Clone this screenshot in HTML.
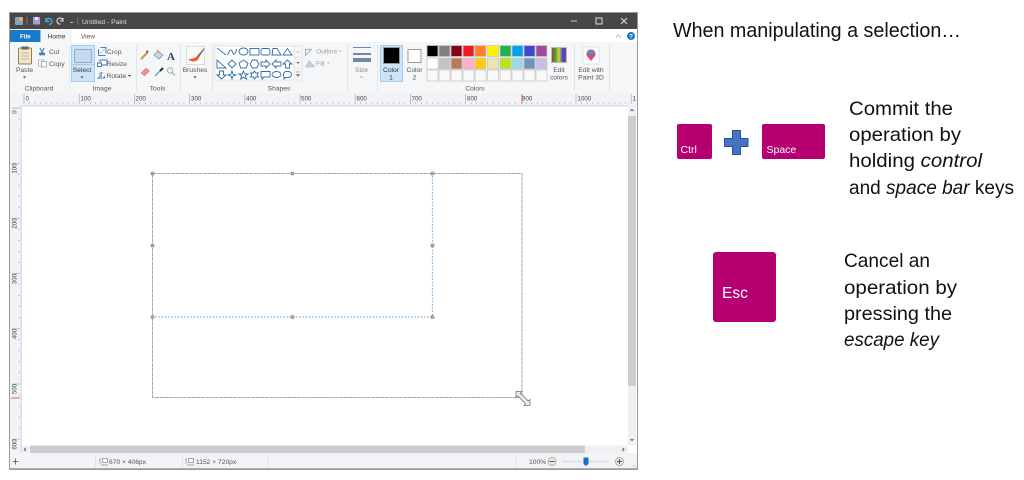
<!DOCTYPE html>
<html><head><meta charset="utf-8"><style>
html,body{margin:0;padding:0;background:#fff;width:1024px;height:480px;overflow:hidden}
svg{display:block;position:absolute;left:0;top:0}
.u{font-family:"Liberation Sans",sans-serif;font-size:6.7px;fill:#555}
.c{text-anchor:middle}
.r{font-family:"Liberation Sans",sans-serif;font-size:6.2px;fill:#444}
.t{font-family:"Liberation Sans",sans-serif;font-size:19.5px;fill:#111}
.i{font-style:italic}
.sh{fill:none;stroke:#2f6ea8;stroke-width:.9}
#w{filter:blur(.35px)}
</style></head><body>
<svg width="1024" height="480" viewBox="0 0 1024 480" xmlns="http://www.w3.org/2000/svg">
<g id="w">
<rect x="9.5" y="12.5" width="628" height="457" fill="#fff" stroke="#999"/>
<rect x="10" y="13" width="627" height="16" fill="#474747"/>
<!-- QAT -->
<rect x="15" y="17" width="8" height="8" rx="1" fill="#7fa8b8"/><circle cx="21" cy="19" r="2" fill="#e8b050"/>
<rect x="26.5" y="17" width=".8" height="8" fill="#888"/>
<rect x="33" y="17" width="7" height="7.5" fill="#a99bd8"/><rect x="35" y="17" width="3" height="3" fill="#eee"/>
<path d="M46 21.5a3 3 0 1 1 3 3M46 18v3.5h3.5" fill="none" stroke="#4aa0e0" stroke-width="1.5"/>
<path d="M63 21a3 3 0 1 0-2.5 3M63 18v3h-3" fill="none" stroke="#ccc" stroke-width="1.3"/>
<rect x="70" y="22" width="3" height="1" fill="#bbb"/>
<rect x="77.5" y="17" width=".7" height="8" fill="#888"/>
<text x="82" y="24" class="u" style="font-size:6.8px;fill:#ddd">Untitled - Paint</text>
<rect x="571" y="20.5" width="6" height="1" fill="#ccc"/>
<rect x="596" y="18" width="6" height="6" fill="none" stroke="#ddd"/>
<path d="M621 18l6 6m0-6l-6 6" stroke="#ddd" stroke-width="1"/>
<!-- tabs -->
<rect x="10" y="29" width="627" height="13" fill="#fff"/>
<rect x="10" y="30" width="30.5" height="12" fill="#1979ca"/>
<text x="25.3" y="38.5" class="u c" style="fill:#fff;font-weight:bold;font-size:6.2px">File</text>
<rect x="41" y="30" width="31" height="12" fill="#f5f6f7"/>
<text x="56.5" y="38.5" class="u c" style="fill:#333">Home</text>
<text x="88" y="38.5" class="u c">View</text>
<path d="M616 37.5l2.500-2.500 2.500 2.500" fill="none" stroke="#bbb"/>
<circle cx="631" cy="36" r="4" fill="#1979ca"/><text x="631" y="38.5" class="u c" style="fill:#fff;font-size:6.5px;font-weight:bold">?</text>
<!-- ribbon -->
<rect x="10" y="42" width="627" height="51" fill="#f5f6f7"/>
<g fill="#e4e5e7">
<rect x="69" y="45" width="1" height="46"/><rect x="136" y="45" width="1" height="46"/><rect x="180" y="45" width="1" height="46"/><rect x="212" y="45" width="1" height="46"/><rect x="347" y="45" width="1" height="46"/><rect x="377" y="45" width="1" height="46"/><rect x="574" y="45" width="1" height="46"/><rect x="609" y="45" width="1" height="46"/>
</g>
<!-- paste -->
<rect x="18.5" y="48" width="13" height="16" rx="1" fill="#f2e6cf" stroke="#9a7a4a"/>
<rect x="21.5" y="46.5" width="7" height="3" fill="#666"/>
<path d="M21 53h8M21 56h8M21 59h8" stroke="#b8a888" stroke-width=".8"/>
<text x="24.5" y="72" class="u c">Paste</text>
<path d="M23 76.5h3l-1.500 1.800z" fill="#333"/>
<!-- cut copy -->
<path d="M40 48l3 6m1-6l-3 6" stroke="#5a80b8" stroke-width="1.2"/>
<circle cx="40.5" cy="54" r="1.500" fill="#3a78c0"/><circle cx="43.5" cy="54" r="1.500" fill="#3a78c0"/>
<text x="49" y="54" class="u">Cut</text>
<rect x="38.5" y="60" width="5" height="6" fill="#fff" stroke="#aaa" stroke-width=".8"/><rect x="41.5" y="61.5" width="5" height="5.5" fill="#fff" stroke="#999" stroke-width=".8"/>
<text x="49" y="66" class="u">Copy</text>
<text x="39" y="90.5" class="u c">Clipboard</text>
<!-- select -->
<rect x="71.5" y="45.5" width="23" height="36" fill="#cce4f7" stroke="#a3cdee"/>
<rect x="71.5" y="64" width="23" height=".8" fill="#9cc4e4"/>
<rect x="74.5" y="49.5" width="17" height="13" fill="#c5daf0" stroke="#6e94c0" stroke-dasharray="2 1"/>
<text x="82" y="72" class="u c" style="fill:#333">Select</text>
<path d="M80.5 76.5h3l-1.500 1.800z" fill="#333"/>
<!-- crop resize rotate -->
<path d="M98.5 49v6.5h7M100.5 47.5h5.500v6" fill="none" stroke="#4b7fbd"/><path d="M98 55l8-7" stroke="#a8b8cc" stroke-width=".6"/>
<text x="107" y="54" class="u">Crop</text>
<rect x="100" y="60" width="7" height="5" fill="#fff" stroke="#3a78c0"/><rect x="97.5" y="63" width="4" height="3.5" fill="#fff" stroke="#3a78c0"/>
<text x="106.5" y="66" class="u">Resize</text>
<path d="M97.5 78.5l4-5.500v5.500z" fill="#9bb8d8" stroke="#4b7fbd" stroke-width=".5"/><path d="M102 78.5l3-3v3z" fill="#4b7fbd"/><path d="M99 74a3 3 0 0 1 4-1" fill="none" stroke="#48a" stroke-width=".7"/>
<text x="106.5" y="78" class="u">Rotate</text><path d="M128 75h3l-1.500 1.800z" fill="#333"/>
<text x="102" y="90.5" class="u c">Image</text>
<!-- tools -->
<path d="M141 59l6.500-6.500" stroke="#c89a38" stroke-width="2"/><path d="M146.5 52.5l1.500-1.500" stroke="#b35" stroke-width="2"/>
<path d="M154 55l4-4 5 4-4 4z" fill="#c7d4e8" stroke="#7a93b8" stroke-width=".7"/><path d="M157 50l3 3" stroke="#e8875a" stroke-width="1.2"/>
<text x="171" y="60" style="font-family:'Liberation Serif',serif;font-size:11px;font-weight:bold;fill:#28405e;text-anchor:middle">A</text>
<path d="M141 73l5-5 3.500 3-5 5z" fill="#e8909a" stroke="#c76a78" stroke-width=".5"/>
<path d="M155 76l5-5" stroke="#7a9cc8" stroke-width="1.4"/><path d="M160 71l3-3" stroke="#333" stroke-width="2"/>
<circle cx="170" cy="70.5" r="2.700" fill="#eef4fa" stroke="#8aa" stroke-width=".8"/><path d="M172 72.5l3 3" stroke="#c9a050" stroke-width="1.2"/>
<text x="157.5" y="90.5" class="u c">Tools</text>
<!-- brushes -->
<rect x="186.5" y="46.5" width="18" height="18" fill="#fafafa" stroke="#ddd"/>
<path d="M188 59c4 4 9 3 11-1l-2-2c-2 2-5 3-9 3z" fill="#e9622a"/><path d="M197 56l7-8 .5 1-6 9z" fill="#8a6a50"/>
<text x="195" y="72" class="u c">Brushes</text>
<path d="M193.5 76.5h3l-1.500 1.800z" fill="#333"/>
<!-- shapes -->
<rect x="215" y="46" width="87" height="34" fill="#fff" stroke="#e4e5e7"/>
<g class="sh">
<path d="M217 48l9 7"/><path d="M227 55c2-1 2-5 4-5s1 4 3 4 2-4 3-5"/>
<ellipse cx="243.5" cy="51.5" rx="4.500" ry="3.500"/><rect x="250" y="48.5" width="9" height="6.5"/><rect x="261" y="48.5" width="9" height="6.5" rx="2"/>
<path d="M272 55l1-6.500h4l4 6.500z"/><path d="M283 55l4.500-6.500 4.500 6.500z"/>
<path d="M217 60v8h9z"/><path d="M232 60l4 4-4 4-4-4z"/><path d="M243.5 60l4.500 3.200-1.700 4.800h-5.600l-1.700-4.800z"/>
<path d="M252.5 60h4l2.500 4-2.500 4h-4l-2.500-4z"/><path d="M261 62h5v-2l4 4-4 4v-2h-5z"/><path d="M281 62h-5v-2l-4 4 4 4v-2h5z"/><path d="M285.5 68v-4h-2.500l4.500-4 4.500 4h-2.500v4z"/>
<path d="M219.5 71h4v4h2.500l-4.500 4-4.500-4h2.500z"/><path d="M232 71l1 3 3 1-3 1-1 3-1-3-3-1 3-1z"/><path d="M243.5 71l1.300 3h3.200l-2.600 2 1 3-2.900-1.800-2.900 1.800 1-3-2.600-2h3.200z"/>
<path d="M254.5 71l1.200 2h2.800l-1.400 2 1.400 2h-2.800l-1.200 2-1.200-2h-2.800l1.400-2-1.400-2h2.800z"/>
<path d="M261 71.5h9v5.500h-6l-2 2v-2h-1z"/><ellipse cx="276.5" cy="74.5" rx="4.500" ry="3"/><path d="M283.5 74.500a3 3 0 0 1 3-3h2a3 3 0 0 1 0 6h-3l-1.500 1.500v-2a3 3 0 0 1-.5-2.500z"/>
</g>
<rect x="294" y="46" width="8" height="11" fill="#f5f6f7" stroke="#e4e5e7"/><rect x="294" y="57" width="8" height="11" fill="#f5f6f7" stroke="#e4e5e7"/><rect x="294" y="68" width="8" height="12" fill="#f5f6f7" stroke="#e4e5e7"/>
<path d="M296.5 52.5l1.500-1.500 1.500 1.500" fill="none" stroke="#bbb" stroke-width=".7"/><path d="M296.5 62h3l-1.500 1.800z" fill="#444"/><path d="M296 72h4M296.5 74.5h3l-1.500 1.800z" stroke="#666" stroke-width=".6" fill="#666"/>
<path d="M305.5 56v-6.500h6M306 55l6-6" stroke="#a8aeb8" fill="none"/>
<text x="316" y="53.5" class="u" style="fill:#a0a0a0">Outline</text><path d="M339 50.5h2.500l-1.200 1.500z" fill="#aaa"/>
<path d="M306 67l3-6 5 5v1z" fill="#c5d0e0" stroke="#9fb0c8" stroke-width=".6"/>
<text x="316" y="65.5" class="u" style="fill:#a0a0a0">Fill</text><path d="M327 62.5h2.500l-1.200 1.500z" fill="#aaa"/>
<text x="279" y="90.5" class="u c">Shapes</text>
<!-- size -->
<rect x="353" y="47" width="18" height="1" fill="#7088ae"/><rect x="353" y="53" width="18" height="2" fill="#7088ae"/><rect x="353" y="58" width="18" height="4" fill="#7088ae"/>
<text x="361.5" y="72" class="u c" style="fill:#888">Size</text>
<path d="M360 76.5h3l-1.500 1.800z" fill="#aaa"/>
<!-- colour 1/2 -->
<rect x="380.5" y="45.5" width="22" height="36" fill="#cce4f7" stroke="#a3cdee"/>
<rect x="383.5" y="47.5" width="16" height="16" fill="#000" stroke="#999"/>
<text x="391" y="72" class="u c" style="fill:#333">Color</text><text x="391" y="79.5" class="u c" style="fill:#333">1</text>
<rect x="408" y="49.5" width="13" height="13" fill="#fff" stroke="#999"/>
<text x="414.5" y="72" class="u c">Color</text><text x="414.5" y="79.5" class="u c">2</text>
<!-- palette -->
<g stroke="#c8c8c8" stroke-width=".8">
<rect x="427" y="45.5" width="11" height="11" fill="#000"/><rect x="439" y="45.5" width="11" height="11" fill="#7f7f7f"/><rect x="451" y="45.5" width="11" height="11" fill="#880015"/><rect x="463" y="45.5" width="11" height="11" fill="#ed1c24"/><rect x="475" y="45.5" width="11" height="11" fill="#ff7f27"/><rect x="487.5" y="45.5" width="11" height="11" fill="#fff200"/><rect x="500" y="45.5" width="11" height="11" fill="#22b14c"/><rect x="512" y="45.5" width="11" height="11" fill="#00a2e8"/><rect x="524" y="45.5" width="11" height="11" fill="#3f48cc"/><rect x="536" y="45.5" width="11" height="11" fill="#a349a4"/>
<rect x="427" y="58" width="11" height="11" fill="#fff"/><rect x="439" y="58" width="11" height="11" fill="#c3c3c3"/><rect x="451" y="58" width="11" height="11" fill="#b97a57"/><rect x="463" y="58" width="11" height="11" fill="#ffaec9"/><rect x="475" y="58" width="11" height="11" fill="#ffc90e"/><rect x="487.5" y="58" width="11" height="11" fill="#efe4b0"/><rect x="500" y="58" width="11" height="11" fill="#b5e61d"/><rect x="512" y="58" width="11" height="11" fill="#99d9ea"/><rect x="524" y="58" width="11" height="11" fill="#7092be"/><rect x="536" y="58" width="11" height="11" fill="#c8bfe7"/>
<rect x="427" y="70" width="11" height="11" fill="#f8f8f8"/><rect x="439" y="70" width="11" height="11" fill="#f8f8f8"/><rect x="451" y="70" width="11" height="11" fill="#f8f8f8"/><rect x="463" y="70" width="11" height="11" fill="#f8f8f8"/><rect x="475" y="70" width="11" height="11" fill="#f8f8f8"/><rect x="487.5" y="70" width="11" height="11" fill="#f8f8f8"/><rect x="500" y="70" width="11" height="11" fill="#f8f8f8"/><rect x="512" y="70" width="11" height="11" fill="#f8f8f8"/><rect x="524" y="70" width="11" height="11" fill="#f8f8f8"/><rect x="536" y="70" width="11" height="11" fill="#f8f8f8"/>
</g>
<text x="475" y="90.5" class="u c">Colors</text>
<!-- edit colours -->
<defs><linearGradient id="g" x1="0" x2="1" y1="0" y2="0"><stop offset="0" stop-color="#c03030"/><stop offset=".25" stop-color="#40a040"/><stop offset=".5" stop-color="#e0d030"/><stop offset=".75" stop-color="#3050d0"/><stop offset="1" stop-color="#a030a0"/></linearGradient></defs>
<rect x="551.5" y="47.5" width="15" height="15" fill="url(#g)" stroke="#bbb"/>
<text x="559" y="72" class="u c">Edit</text><text x="559" y="79.5" class="u c">colors</text>
<!-- paint 3D -->
<rect x="583" y="47" width="16" height="17" fill="#fff" stroke="#e0e0e0"/>
<path d="M591 61l-4-5a4.500 4.500 0 1 1 8 0z" fill="#e0457f"/><path d="M587 53a4.500 4.500 0 0 1 8 0l-4 2z" fill="#3a9ad8"/>
<text x="591" y="72" class="u c">Edit with</text><text x="591" y="79.5" class="u c">Paint 3D</text>
<!-- workspace -->
<rect x="10" y="93" width="627" height="14" fill="#f1f3f7"/>
<rect x="10" y="93" width="12" height="360" fill="#f1f3f7"/>
<rect x="22" y="105" width="606" height="1.5" fill="#d6dfeb"/>
<rect x="20.5" y="105" width="1.5" height="348" fill="#d6dfeb"/>
<rect x="22" y="106.5" width="606" height="339" fill="#fff"/>
<!-- h ruler -->
<path d="M24 94v10M79.2 94v10M134.4 94v10M189.6 94v10M244.8 94v10M300 94v10M355.2 94v10M410.4 94v10M465.6 94v10M576 94v10M631.2 94v10" stroke="#aab" stroke-width=".7"/>
<path d="M29.5 102v2M35 102v2M40.5 102v2M46 102v2M51.5 102v2M57 102v2M62.5 102v2M68 102v2M73.5 102v2M84.7 102v2M90.2 102v2M95.7 102v2M101.2 102v2M106.7 102v2M112.2 102v2M117.7 102v2M123.2 102v2M128.7 102v2M139.9 102v2M145.4 102v2M150.9 102v2M156.4 102v2M161.9 102v2M167.4 102v2M172.9 102v2M178.4 102v2M183.9 102v2M195.1 102v2M200.6 102v2M206.1 102v2M211.6 102v2M217.1 102v2M222.6 102v2M228.1 102v2M233.6 102v2M239.1 102v2M250.3 102v2M255.8 102v2M261.3 102v2M266.8 102v2M272.3 102v2M277.8 102v2M283.3 102v2M288.8 102v2M294.3 102v2M305.5 102v2M311 102v2M316.5 102v2M322 102v2M327.5 102v2M333 102v2M338.5 102v2M344 102v2M349.5 102v2M360.7 102v2M366.2 102v2M371.7 102v2M377.2 102v2M382.7 102v2M388.2 102v2M393.7 102v2M399.2 102v2M404.7 102v2M415.9 102v2M421.4 102v2M426.9 102v2M432.4 102v2M437.9 102v2M443.4 102v2M448.9 102v2M454.4 102v2M459.9 102v2M471.1 102v2M476.6 102v2M482.1 102v2M487.6 102v2M493.1 102v2M498.6 102v2M504.1 102v2M509.6 102v2M515.1 102v2M526.3 102v2M531.8 102v2M537.3 102v2M542.8 102v2M548.3 102v2M553.8 102v2M559.3 102v2M564.8 102v2M570.3 102v2M581.5 102v2M587 102v2M592.5 102v2M598 102v2M603.5 102v2M609 102v2M614.5 102v2M620 102v2M625.5 102v2" stroke="#aab" stroke-width=".6"/>
<g class="r">
<text x="25.5" y="100.5">0</text><text x="80.5" y="100.5">100</text><text x="135.5" y="100.5">200</text><text x="191" y="100.5">300</text><text x="246" y="100.5">400</text><text x="301" y="100.5">500</text><text x="356.5" y="100.5">600</text><text x="411.5" y="100.5">700</text><text x="467" y="100.5">800</text><text x="522" y="100.5">900</text><text x="577.5" y="100.5">1000</text><text x="632.5" y="100.5">1</text>
</g>
<rect x="521.5" y="94" width="1" height="10" fill="#e06060"/>
<!-- v ruler -->
<path d="M12 108h8M12 163.2h8M12 218.4h8M12 273.6h8M12 328.8h8M12 384h8M12 439.2h8" stroke="#aab" stroke-width=".7"/>
<path d="M18 119h2M18 130h2M18 141h2M18 152h2M18 174.2h2M18 185.2h2M18 196.2h2M18 207.2h2M18 229.4h2M18 240.4h2M18 251.4h2M18 262.4h2M18 284.6h2M18 295.6h2M18 306.6h2M18 317.6h2M18 339.8h2M18 350.8h2M18 361.8h2M18 372.8h2M18 395h2M18 406h2M18 417h2M18 428h2" stroke="#aab" stroke-width=".6"/>
<g class="r">
<text transform="translate(16.5,112) rotate(-90)" text-anchor="middle">0</text>
<text transform="translate(16.5,168.5) rotate(-90)" text-anchor="middle">100</text>
<text transform="translate(16.5,223.5) rotate(-90)" text-anchor="middle">200</text>
<text transform="translate(16.5,279) rotate(-90)" text-anchor="middle">300</text>
<text transform="translate(16.5,334) rotate(-90)" text-anchor="middle">400</text>
<text transform="translate(16.5,389) rotate(-90)" text-anchor="middle">500</text>
<text transform="translate(16.5,444.5) rotate(-90)" text-anchor="middle">600</text>
</g>
<rect x="11" y="397.5" width="9" height="1" fill="#e06060"/>
<!-- scrollbars -->
<rect x="628" y="106" width="8" height="339" fill="#f0f0f0"/>
<rect x="628" y="116" width="8" height="270" fill="#cdcdcd"/>
<path d="M630.5 111l1.500-1.500 1.500 1.500M630.5 439l1.500 1.500 1.500-1.500" fill="none" stroke="#555" stroke-width=".9"/>
<rect x="22" y="445.5" width="606" height="8" fill="#f0f0f0"/>
<rect x="30" y="445.5" width="555" height="8" fill="#cdcdcd"/>
<path d="M25.8 448l-1.500 1.500 1.500 1.500M622.5 448l1.500 1.500-1.500 1.500" fill="none" stroke="#555" stroke-width=".9"/>
<!-- status -->
<rect x="10" y="453" width="627" height="15" fill="#f1f3f7"/>
<rect x="10" y="468" width="627" height="1" fill="#b0b0b0"/>
<path d="M95.5 454v13M182.5 454v13M268 454v13M516 454v13" stroke="#e2e4e8"/>
<path d="M12.5 461.5h6M15.5 458.500v6" stroke="#555" stroke-width=".8" fill="#555"/>
<rect x="102.5" y="458.5" width="5" height="4" fill="#fff" stroke="#788" stroke-width=".7"/><path d="M100 458v6M101 465h7" stroke="#889" stroke-width=".7"/>
<text x="109" y="463.8" class="u">670 × 406px</text>
<rect x="188.5" y="458.5" width="5" height="4" fill="#fff" stroke="#788" stroke-width=".7"/><path d="M186 458v6M187 465h7" stroke="#889" stroke-width=".7"/>
<text x="196" y="463.8" class="u">1152 × 720px</text>
<text x="529" y="464" class="u">100%</text>
<circle cx="552" cy="461.5" r="4" fill="#e8e8e8" stroke="#999" stroke-width=".7"/><rect x="549.5" y="461" width="5" height="1" fill="#555"/>
<rect x="562" y="460.5" width="47" height="2" fill="#e0e2e6"/>
<path d="M583.5 457.5h5v6.500l-2.500 2-2.500-2z" fill="#1a70c8"/>
<circle cx="619.5" cy="461.5" r="4" fill="#e8e8e8" stroke="#999" stroke-width=".7"/><path d="M617 461.5h5M619.5 459v5" stroke="#555"/>
<path d="M636 466l-2 2M636 463l-5 5" stroke="#ccc" stroke-width=".6"/>
<!-- canvas -->
<rect x="152.5" y="173.500" width="369.5" height="224" fill="none" stroke="#aaa" stroke-dasharray="4 .6"/>
<path d="M432.5 176v139M155 317h276" fill="none" stroke="#7fb8e6" stroke-width="1.2" stroke-dasharray="1.6 1.6"/>
<g fill="#b0b0b0" stroke="#777" stroke-width=".6">
<rect x="151" y="172" width="3" height="3" rx="1"/><rect x="291" y="172" width="3" height="3" rx="1"/><rect x="431" y="172" width="3" height="3" rx="1"/><rect x="151" y="244" width="3" height="3" rx="1"/><rect x="431" y="244" width="3" height="3" rx="1"/><rect x="151" y="315.5" width="3" height="3" rx="1"/><rect x="291" y="315.5" width="3" height="3" rx="1"/><rect x="431" y="315.5" width="3" height="3" rx="1"/>
</g>
<path d="M516 391.5h6l-1.700 1.700 8 8 1.700-1.700v6h-6l1.700-1.700-8-8-1.700 1.700z" fill="#eee" stroke="#777" stroke-width=".8"/>
</g>
<!-- right -->
<text x="673" y="37" class="t" style="font-size:20.5px" textLength="288" lengthAdjust="spacingAndGlyphs">When manipulating a selection…</text>
<text x="849" y="115" class="t" textLength="104" lengthAdjust="spacingAndGlyphs">Commit the</text>
<text x="849" y="141" class="t" textLength="112" lengthAdjust="spacingAndGlyphs">operation by</text>
<text x="849" y="167" class="t" textLength="133" lengthAdjust="spacingAndGlyphs">holding <tspan class="i">control</tspan></text>
<text x="849" y="194" class="t" textLength="165" lengthAdjust="spacingAndGlyphs">and <tspan class="i">space bar</tspan> keys</text>
<text x="844" y="267" class="t" textLength="86" lengthAdjust="spacingAndGlyphs">Cancel an</text>
<text x="844" y="294" class="t" textLength="113" lengthAdjust="spacingAndGlyphs">operation by</text>
<text x="844" y="320" class="t" textLength="108" lengthAdjust="spacingAndGlyphs">pressing the</text>
<text x="844" y="346" class="t i" textLength="95" lengthAdjust="spacingAndGlyphs">escape key</text>
<rect x="677" y="124" width="35" height="35" rx="2" fill="#b60072"/>
<text x="680.5" y="153" style="font-family:'Liberation Sans',sans-serif;font-size:10.5px;fill:#fff">Ctrl</text>
<rect x="762" y="124" width="63" height="35" rx="2" fill="#b60072"/>
<text x="766.5" y="153" style="font-family:'Liberation Sans',sans-serif;font-size:10.5px;fill:#fff">Space</text>
<path d="M732.500 130.500h8v8h7.500v8h-7.500v8h-8v-8h-8v-8h8z" fill="#4472c4" stroke="#2f528f"/>
<rect x="713" y="252" width="63" height="70" rx="3" fill="#b60072"/>
<text x="722" y="298" style="font-family:'Liberation Sans',sans-serif;font-size:15.5px;fill:#fff">Esc</text>
</svg>
</body></html>
